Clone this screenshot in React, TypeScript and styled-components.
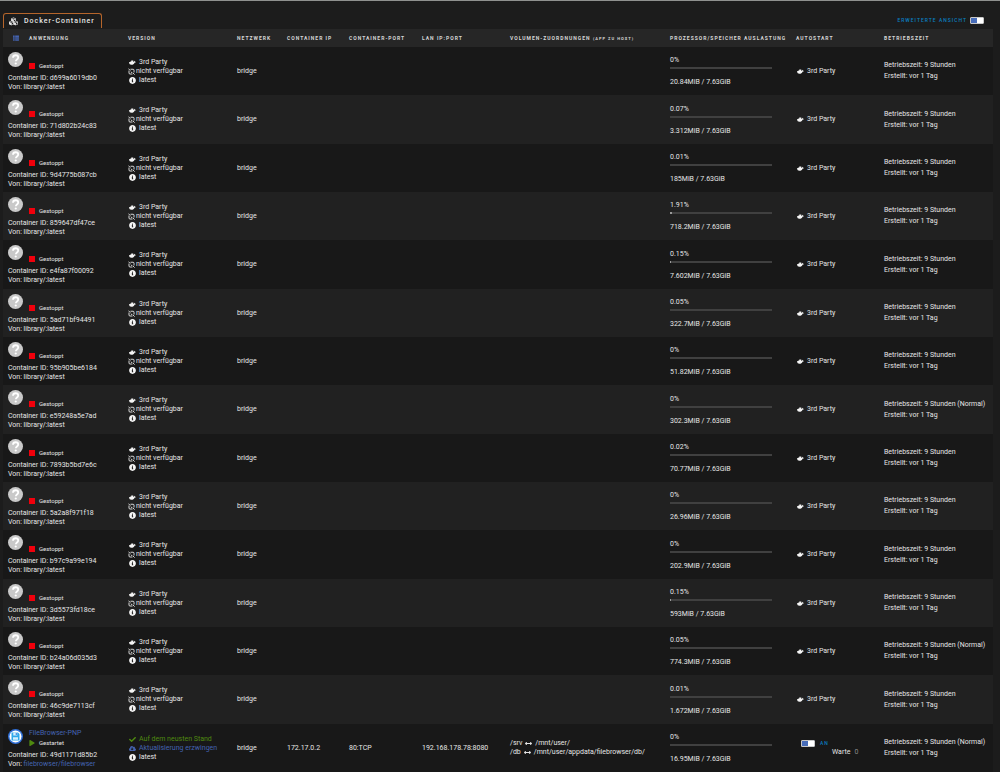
import React, { useState } from "react";
import styled, { createGlobalStyle } from "styled-components";
import {
  FaArrowsAltH,
  FaCheck,
  FaCloudDownloadAlt,
  FaCubes,
  FaInfoCircle,
  FaPlay,
  FaThList,
} from "react-icons/fa";

const color = {
  page: "#1c1c1c",
  head: "#262626",
  odd: "#181818",
  even: "#212121",
  text: "#e6e6e6",
  headText: "#d6d6d6",
  link: "#4463b0",
  accent: "#0a7fc0",
  toggle: "#486dba",
  green: "#4f8a10",
  red: "#f0000c",
  tab: "#b5652b",
};

const GlobalStyle = createGlobalStyle`
  * { box-sizing: border-box; }
  body {
    margin: 0;
    background: ${color.page};
    color: ${color.text};
    font-family: Roboto, "Noto Sans", sans-serif;
    font-size: 7px;
    line-height: 9px;
  }
`;

const Page = styled.div`
  border-top: 1px solid #8f918f;
  padding: 12px 7px 0 3px;
`;

const TopBar = styled.header`
  display: flex;
  justify-content: space-between;
  align-items: flex-start;
  height: 16px;
`;

const Tab = styled.h1`
  display: flex;
  align-items: center;
  gap: 6px;
  height: 15px;
  margin: 0;
  padding: 0 6px 0 5px;
  border: 1px solid ${color.tab};
  border-bottom: 0;
  border-radius: 3px 3px 0 0;
  font-size: 7px;
  font-weight: 500;
  letter-spacing: 1px;
  white-space: nowrap;
`;

const SwitchLabel = styled.label`
  display: flex;
  align-items: center;
  gap: 5px;
  color: ${color.accent};
  font-size: 5px;
  font-weight: 500;
  letter-spacing: 1px;
  white-space: nowrap;
`;

const ViewSwitch = styled(SwitchLabel)`
  gap: 3px;
  height: 15px;
  padding-right: 9px;
`;

const Switch = styled.input.attrs({ type: "checkbox", role: "switch" })`
  appearance: none;
  width: 14px;
  height: 7px;
  margin: 0;
  border: 1px solid #c8c8c8;
  border-radius: 1px;
  background: linear-gradient(90deg, ${color.toggle} 50%, #ffffff 50%);
  cursor: pointer;

  &:not(:checked) {
    background: linear-gradient(90deg, #ffffff 50%, #777777 50%);
  }
`;

const Table = styled.table`
  width: 100%;
  table-layout: fixed;
  border-collapse: collapse;
`;

const Col = styled.col<{ $w: number }>`
  width: ${(p) => p.$w}px;
`;

const HeadCell = styled.th`
  height: 18px;
  padding: 0;
  background: ${color.head};
  color: ${color.headText};
  font-size: 5px;
  font-weight: 700;
  letter-spacing: 1px;
  text-align: left;
  text-transform: uppercase;
  white-space: nowrap;

  small {
    font-size: 4px;
  }
`;

const AppHead = styled.div`
  display: flex;
  align-items: center;
  gap: 10px;
  padding-left: 10px;

  svg {
    color: ${color.link};
    font-size: 6px;
  }
`;

const Row = styled.tr`
  height: 48px;
  background: ${color.odd};

  &:nth-child(even) {
    background: ${color.even};
  }
  &:nth-child(3n + 2) {
    height: 49px;
  }
`;

const Cell = styled.td`
  padding: 0;
  vertical-align: middle;
  white-space: nowrap;
`;

const AppCell = styled(Cell)`
  padding: 5px 0 0 5px;
  vertical-align: top;
`;

const AppTop = styled.div`
  display: flex;
  gap: 6px;
  margin-bottom: 4px;

  > svg {
    width: 15px;
    height: 15px;
  }
`;

const NameBlock = styled.div`
  display: grid;
  grid-template-rows: 9px 9px;
`;

const State = styled.span`
  display: flex;
  grid-row: 2;
  align-items: center;
  gap: 4px;
  font-size: 6px;
`;

const StopMark = styled.span`
  width: 6px;
  height: 6px;
  background: ${color.red};
`;

const Link = styled.a`
  color: ${color.link};
  text-decoration: none;
`;

const Line = styled.div<{ $color?: string; $tight?: boolean }>`
  display: flex;
  align-items: center;
  gap: ${(p) => (p.$tight ? 1 : 3)}px;
  padding-left: ${(p) => (p.$tight ? 0 : 1)}px;
  color: ${(p) => p.$color ?? "inherit"};

  svg {
    flex: none;
    color: ${(p) => p.$color ?? "#f4f4f4"};
  }
`;

const Volume = styled.div`
  display: flex;
  align-items: center;
  gap: 3px;
`;

const Load = styled.div`
  padding-top: 1px;
`;

const Bar = styled.div`
  width: 102px;
  height: 2px;
  margin: 2px 0 9px;
  background: #404040;
`;

const BarFill = styled.div`
  height: 100%;
  background: #9a9a9a;
`;

const Uptime = styled.div`
  line-height: 11px;
`;

const Auto = styled.div`
  display: grid;
  padding-left: 5px;
`;

const Wait = styled.label`
  display: flex;
  gap: 4px;
  padding-left: 31px;

  input {
    width: 12px;
    height: 9px;
    padding: 0;
    border: 0;
    background: transparent;
    color: #8a8a8a;
    font: inherit;
  }
`;

const QuestionIcon = () => (
  <svg viewBox="0 0 30 30" aria-hidden="true">
    <circle cx="15" cy="15" r="15" fill="#c9c9c9" />
    <path
      d="M10 11.5c0-3 2.200-5 5.200-5s5.200 1.800 5.200 4.600c0 3.900-4.700 4-4.700 7.400"
      fill="none"
      stroke="#fff"
      strokeWidth="3.600"
    />
    <circle cx="15.500" cy="23" r="2.200" fill="#fff" />
  </svg>
);

const FileBrowserIcon = () => (
  <svg viewBox="0 0 30 30" aria-hidden="true">
    <circle cx="15" cy="15" r="15" fill="#2f6fd6" />
    <circle cx="15" cy="15" r="12" fill="#fff" />
    <path d="M7 7h13l3 3v13H7z" fill="#2fa8ea" />
    <path d="M10.500 7h8v6h-8zM10 16.500h10v5H10z" fill="#d5f0fd" />
    <path d="M15.500 8h2v4h-2z" fill="#2f6fd6" />
  </svg>
);

const WhaleIcon = () => (
  <svg width="7" height="7" viewBox="0 0 14 14" fill="currentColor" aria-hidden="true">
    <path d="M2.500 5h2V3h4v2.500h1.500c.2-1 .5-1.500 1-2 .8.5 1 1.200 1 2 .8-.1 1.400 0 1.900.4-.5 1.200-1.500 1.600-2.900 1.600C10 10.200 8 11.500 5 11.500 2 11.500.3 10 .3 7V6h2.200z" />
  </svg>
);

const BrokenLinkIcon = () => (
  <svg
    width="7"
    height="7"
    viewBox="0 0 14 14"
    fill="none"
    stroke="currentColor"
    strokeWidth="1.700"
    aria-hidden="true"
  >
    <path d="M5 2.500h5a2 2 0 0 1 2 2V9M2 5v5a2 2 0 0 0 2 2h5M.8 1.200 4.600 5M9.400 9.400l3.800 3.800M5.600 7.400 8 9.600" />
  </svg>
);

type Container = { id: string; cpu: string; mem: string; normal?: boolean };

const containers: Container[] = [
  { id: "d699a6019db0", cpu: "0%", mem: "20.84MiB" },
  { id: "71d802b24c83", cpu: "0.07%", mem: "3.312MiB" },
  { id: "9d4775b087cb", cpu: "0.01%", mem: "185MiB" },
  { id: "859647df47ce", cpu: "1.91%", mem: "718.2MiB" },
  { id: "e4fa87f00092", cpu: "0.15%", mem: "7.602MiB" },
  { id: "5ad71bf94491", cpu: "0.05%", mem: "322.7MiB" },
  { id: "95b905be6184", cpu: "0%", mem: "51.82MiB" },
  { id: "e59248a5e7ad", cpu: "0%", mem: "302.3MiB", normal: true },
  { id: "7893b5bd7e6c", cpu: "0.02%", mem: "70.77MiB" },
  { id: "5a2a8f971f18", cpu: "0%", mem: "26.96MiB" },
  { id: "b97c9a99e194", cpu: "0%", mem: "202.9MiB" },
  { id: "3d5573fd18ce", cpu: "0.15%", mem: "593MiB" },
  { id: "b24a06d035d3", cpu: "0.05%", mem: "774.3MiB", normal: true },
  { id: "46c9de7113cf", cpu: "0.01%", mem: "1.672MiB" },
];

const columns = [125, 109, 50, 62, 73, 88, 160, 126, 88, 109];

const LoadCell = ({ cpu, mem }: { cpu: string; mem: string }) => (
  <Cell>
    <Load>
      <div>{cpu}</div>
      <Bar>
        <BarFill style={{ width: cpu }} />
      </Bar>
      <div>{mem} / 7.63GiB</div>
    </Load>
  </Cell>
);

const UptimeCell = ({ normal }: { normal?: boolean }) => (
  <Cell>
    <Uptime>
      <div>Betriebszeit: 9 Stunden{normal ? " (Normal)" : ""}</div>
      <div>Erstellt: vor 1 Tag</div>
    </Uptime>
  </Cell>
);

const ThirdParty = () => (
  <Line>
    <WhaleIcon /> 3rd Party
  </Line>
);

const StoppedRow = ({ id, cpu, mem, normal }: Container) => (
  <Row>
    <AppCell>
      <AppTop>
        <QuestionIcon />
        <NameBlock>
          <State>
            <StopMark /> Gestoppt
          </State>
        </NameBlock>
      </AppTop>
      <div>Container ID: {id}</div>
      <div>Von: library/:latest</div>
    </AppCell>
    <Cell>
      <ThirdParty />
      <Line $tight>
        <BrokenLinkIcon /> nicht verfügbar
      </Line>
      <Line>
        <FaInfoCircle /> latest
      </Line>
    </Cell>
    <Cell>bridge</Cell>
    <Cell />
    <Cell />
    <Cell />
    <Cell />
    <LoadCell cpu={cpu} mem={mem} />
    <Cell>
      <ThirdParty />
    </Cell>
    <UptimeCell normal={normal} />
  </Row>
);

const RunningRow = () => {
  const [auto, setAuto] = useState(true);
  const [wait, setWait] = useState("0");
  return (
    <Row>
      <AppCell>
        <AppTop>
          <FileBrowserIcon />
          <NameBlock>
            <Link href="#filebrowser">FileBrowser-PNP</Link>
            <State>
              <FaPlay color={color.green} /> Gestartet
            </State>
          </NameBlock>
        </AppTop>
        <div>Container ID: 49d1171d85b2</div>
        <div>
          Von: <Link href="#registry">filebrowser/filebrowser</Link>
        </div>
      </AppCell>
      <Cell>
        <Line $color={color.green}>
          <FaCheck /> Auf dem neusten Stand
        </Line>
        <Line $color={color.link}>
          <FaCloudDownloadAlt /> <Link href="#update">Aktualisierung erzwingen</Link>
        </Line>
        <Line>
          <FaInfoCircle /> latest
        </Line>
      </Cell>
      <Cell>bridge</Cell>
      <Cell>172.17.0.2</Cell>
      <Cell>80:TCP</Cell>
      <Cell>192.168.178.78:8080</Cell>
      <Cell>
        <Volume>
          /srv <FaArrowsAltH /> /mnt/user/
        </Volume>
        <Volume>
          /db <FaArrowsAltH /> /mnt/user/appdata/filebrowser/db/
        </Volume>
      </Cell>
      <LoadCell cpu="0%" mem="16.95MiB" />
      <Cell>
        <Auto>
          <SwitchLabel>
            <Switch checked={auto} onChange={(e) => setAuto(e.target.checked)} />
            {auto ? "AN" : "AUS"}
          </SwitchLabel>
          <Wait>
            Warte
            <input value={wait} onChange={(e) => setWait(e.target.value)} />
          </Wait>
        </Auto>
      </Cell>
      <UptimeCell normal />
    </Row>
  );
};

export default function App() {
  const [advanced, setAdvanced] = useState(true);
  return (
    <>
      <GlobalStyle />
      <Page>
        <TopBar>
          <Tab>
            <FaCubes size={9} /> Docker-Container
          </Tab>
          <ViewSwitch>
            ERWEITERTE ANSICHT
            <Switch checked={advanced} onChange={(e) => setAdvanced(e.target.checked)} />
          </ViewSwitch>
        </TopBar>
        <Table>
          <colgroup>
            {columns.map((w, i) => (
              <Col key={i} $w={w} />
            ))}
          </colgroup>
          <thead>
            <tr>
              <HeadCell>
                <AppHead>
                  <FaThList /> Anwendung
                </AppHead>
              </HeadCell>
              <HeadCell>Version</HeadCell>
              <HeadCell>Netzwerk</HeadCell>
              <HeadCell>Container IP</HeadCell>
              <HeadCell>Container-Port</HeadCell>
              <HeadCell>LAN IP:Port</HeadCell>
              <HeadCell>
                Volumen-Zuordnungen <small>(App zu Host)</small>
              </HeadCell>
              <HeadCell>Prozessor/Speicher Auslastung</HeadCell>
              <HeadCell>Autostart</HeadCell>
              <HeadCell>Betriebszeit</HeadCell>
            </tr>
          </thead>
          <tbody>
            {containers.map((c) => (
              <StoppedRow key={c.id} {...c} />
            ))}
            <RunningRow />
          </tbody>
        </Table>
      </Page>
    </>
  );
}
